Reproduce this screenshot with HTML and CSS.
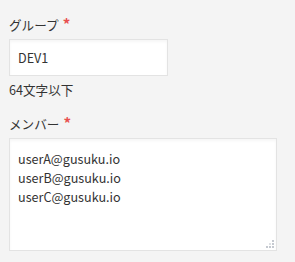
FILE: index.html
```html
<!DOCTYPE html>
<html lang="ja">
<head>
<meta charset="utf-8">
<link rel="stylesheet" href="styles.css">
</head>
<body>
<div class="form">
  <div class="field">
    <label class="label">グループ<span class="req">*</span></label>
    <div class="input">DEV1</div>
    <div class="hint">64文字以下</div>
  </div>
  <div class="field">
    <label class="label">メンバー<span class="req">*</span></label>
    <div class="textarea">
      <div>userA@gusuku.io</div>
      <div>userB@gusuku.io</div>
      <div>userC@gusuku.io</div>
      <svg class="grip" width="9" height="9" viewBox="0 0 9 9"><rect x="6" y="0" width="2" height="2" fill="#c5c9d0"/><rect x="3" y="3" width="2" height="2" fill="#dde0e4"/><rect x="6" y="3" width="2" height="2" fill="#c5c9d0"/><rect x="0" y="6" width="2" height="2" fill="#c5c9d0"/><rect x="3" y="6" width="2" height="2" fill="#c5c9d0"/><rect x="6" y="6" width="2" height="2" fill="#c5c9d0"/></svg>
    </div>
  </div>
</div>
</body>
</html>
```
FILE: styles.css
```css
html, body { margin: 0; padding: 0; background: #f4f4f4; }
body { font-family: "Noto Sans CJK JP", "Noto Sans", sans-serif; color: #333; font-size: 12.6px; }
.form { padding: 15px 9px 0 9px; }
.field { display: flex; flex-direction: column; align-items: flex-start; }
.label { line-height: 19px; color: #333; margin-bottom: 5px; }
.req { color: #e8504f; margin-left: 4px; font-size: 15px; font-weight: bold; line-height: 0; }
.input { box-sizing: border-box; width: 159px; height: 37px; background: #fff; border: 1px solid #e3e3e3; box-shadow: inset 0 2px 3px rgba(0,0,0,0.04); padding: 0 8px; line-height: 35px; }
.hint { margin-top: 4px; line-height: 19px; margin-bottom: 15px; }
.textarea { position: relative; box-sizing: border-box; width: 268px; height: 113px; background: #fff; border: 1px solid #e3e3e3; box-shadow: inset 0 2px 3px rgba(0,0,0,0.04); padding: 10px 8px; line-height: 19px; }
.grip { position: absolute; right: 1px; bottom: 1px; }
```
